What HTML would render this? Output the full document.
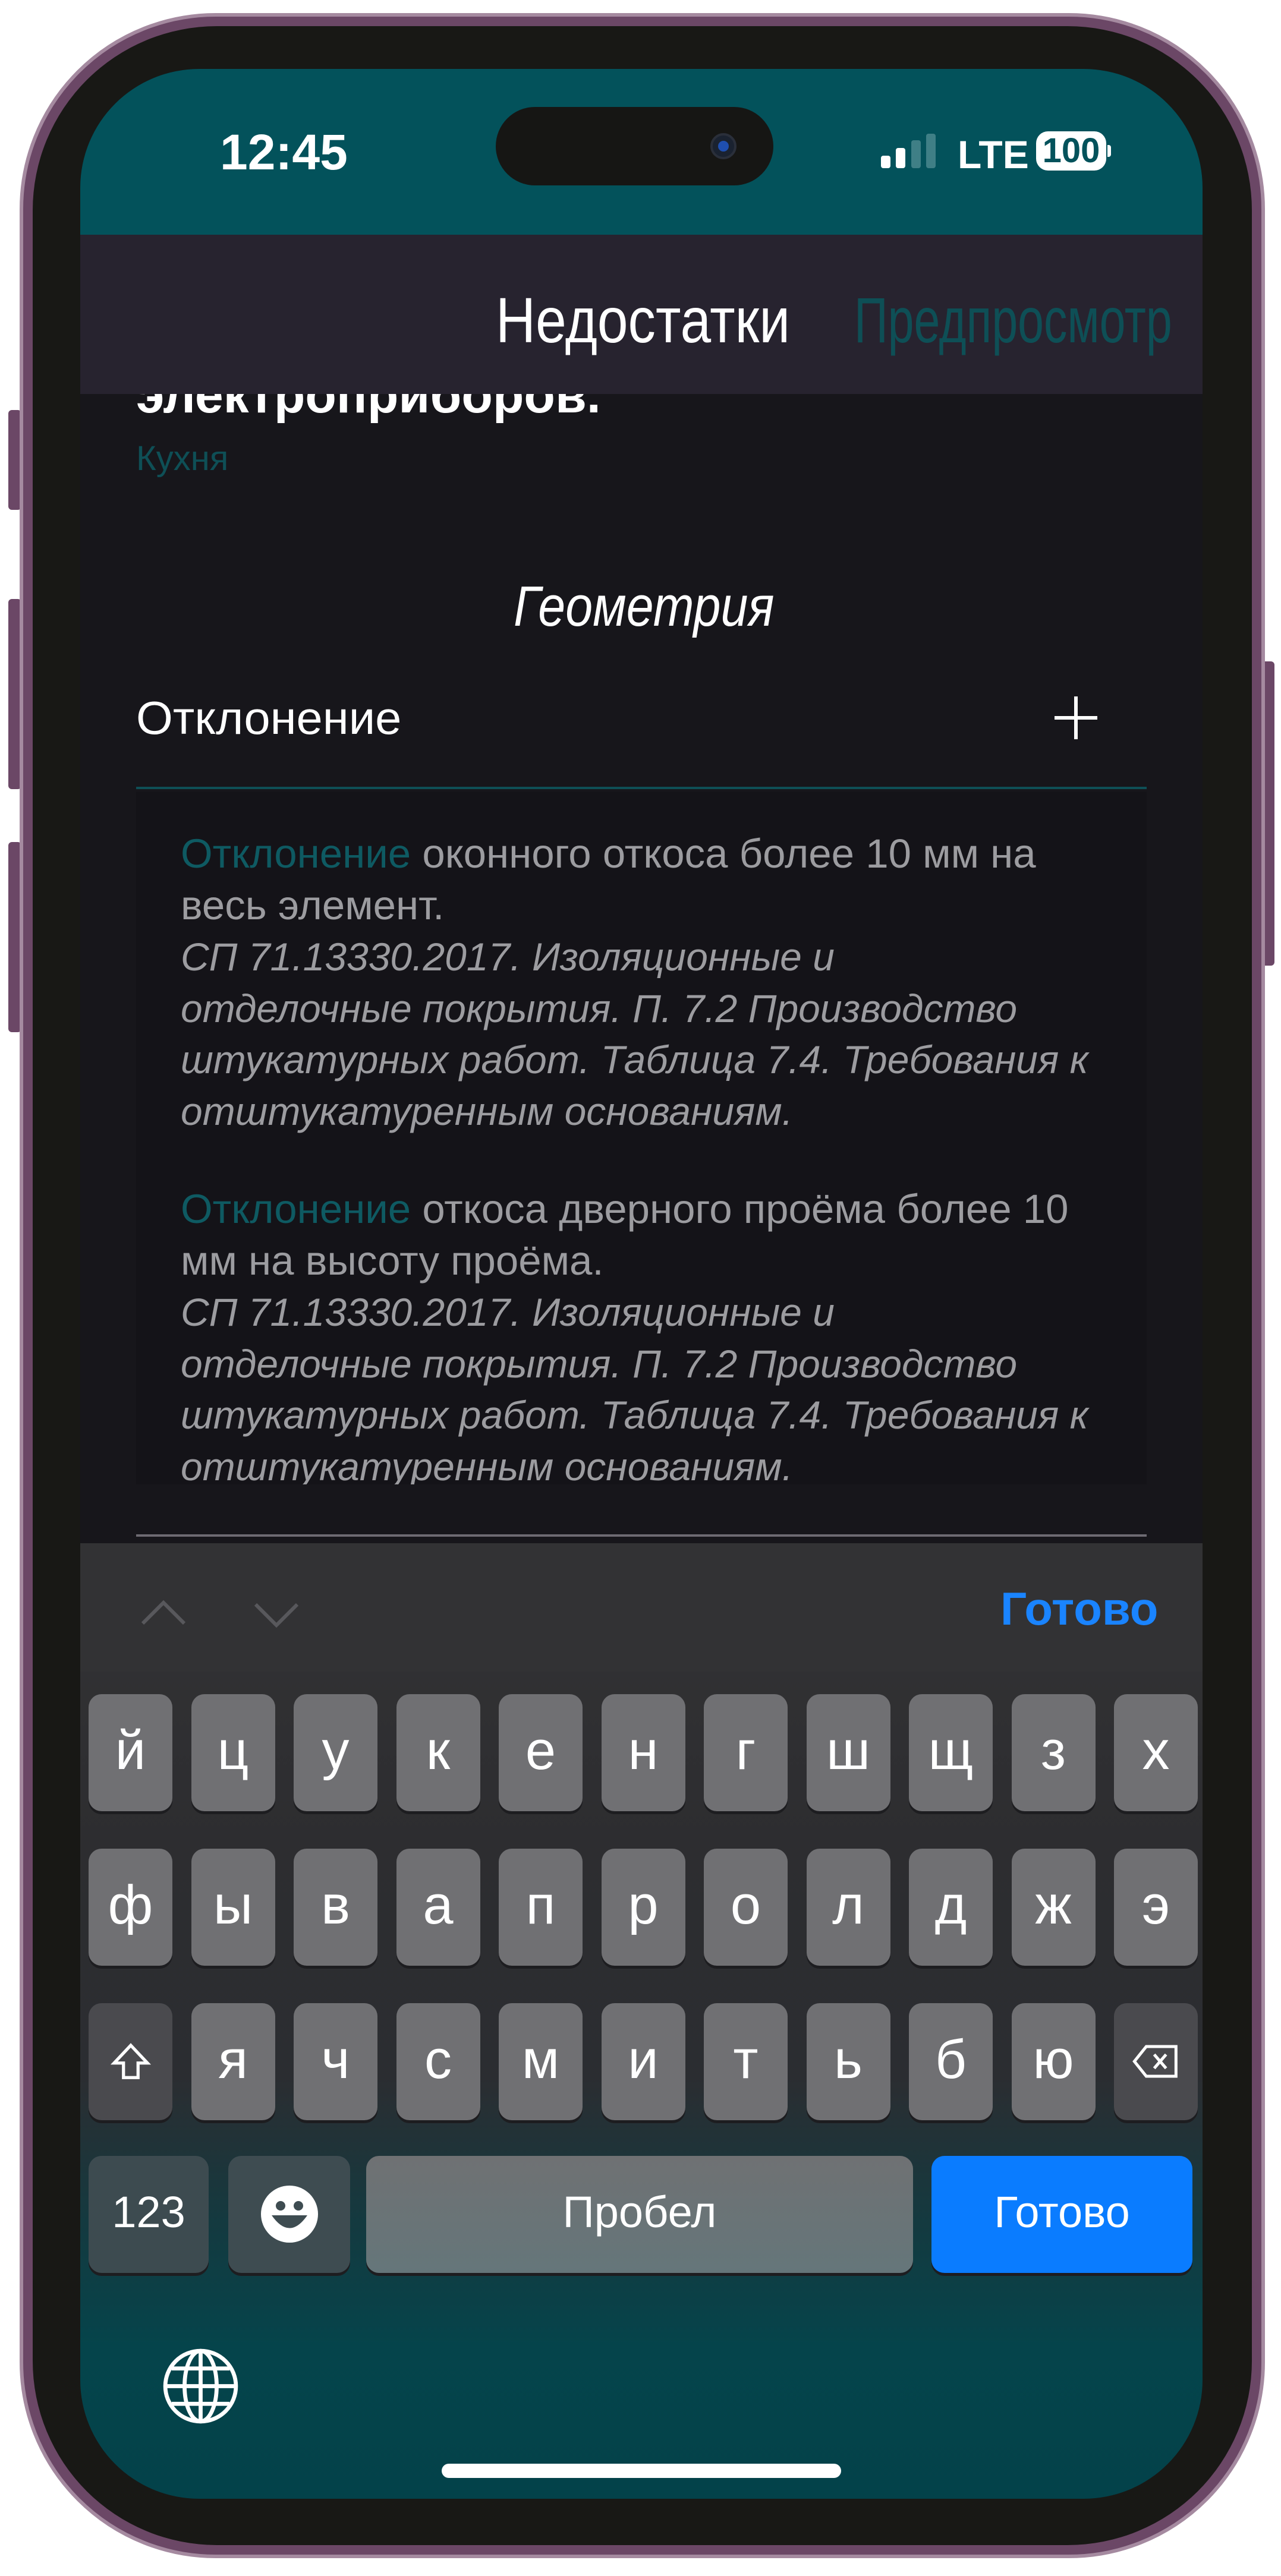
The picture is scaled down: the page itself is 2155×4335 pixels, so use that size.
<!DOCTYPE html>
<html><head><meta charset="utf-8"><style>
*{margin:0;padding:0;box-sizing:border-box}
body{width:2155px;height:4335px;background:#fff;position:relative;overflow:hidden;font-family:"Liberation Sans","DejaVu Sans",sans-serif}
.abs{position:absolute}
.frame{left:33px;top:22px;width:2095px;height:4283px;border-radius:330px;background:#6b4766;border:6px solid #a58aa0}
.bezel{left:55px;top:44px;width:2051px;height:4239px;border-radius:310px;background:#181815}
.screen{left:135px;top:116px;width:1888px;height:4089px;border-radius:200px;overflow:hidden;background:#17161b}
.key{position:absolute;width:141px;height:197px;border-radius:22px;background:#707073;color:#fff;font-size:92px;text-align:center;line-height:190px;box-shadow:0 5px 0 #1d1d20}
.btn{position:absolute;background:#6b4766;border-radius:6px}
.t{position:absolute;white-space:nowrap}
.p{position:absolute;left:169px;font-size:69px;line-height:86.5px;color:#9c9ca0;white-space:nowrap}
.p i{font-style:italic;font-size:66px}
.p b{font-weight:normal;color:#0e5a62}
</style></head><body>
<div class="btn" style="left:14px;top:690px;width:22px;height:168px"></div>
<div class="btn" style="left:14px;top:1008px;width:22px;height:320px"></div>
<div class="btn" style="left:14px;top:1417px;width:22px;height:320px"></div>
<div class="btn" style="left:2122px;top:1113px;width:22px;height:512px"></div>
<div class="abs frame"></div>
<div class="abs bezel"></div>
<div class="abs screen">
  <div class="abs" style="left:0;top:0;width:1888px;height:279px;background:#03525b"></div>
  <div class="t" style="left:235px;top:92px;font-size:84px;font-weight:bold;color:#fff">12:45</div>
  <div class="abs" style="left:699px;top:64px;width:467px;height:132px;border-radius:66px;background:#161614"></div>
  <div class="abs" style="left:1060px;top:108px;width:44px;height:44px;border-radius:50%;background:#1a2230;border:4px solid #2a2f3a"><div class="abs" style="left:9px;top:9px;width:18px;height:18px;border-radius:50%;background:#1f4fb0"></div></div>
  <div class="abs" style="left:1347px;top:146px;width:16px;height:21px;border-radius:4px;background:#fff"></div>
  <div class="abs" style="left:1372px;top:133px;width:16px;height:34px;border-radius:4px;background:#fff"></div>
  <div class="abs" style="left:1398px;top:120px;width:16px;height:47px;border-radius:4px;background:#3f7f86"></div>
  <div class="abs" style="left:1423px;top:109px;width:16px;height:58px;border-radius:4px;background:#3f7f86"></div>
  <div class="t" style="left:1476px;top:106px;font-size:66px;font-weight:bold;color:#fff">LTE</div>
  <div class="abs" style="left:1608px;top:105px;width:118px;height:66px;border-radius:20px;background:#fff;color:#03525b;font-weight:bold;font-size:58px;text-align:center;line-height:66px">100</div>
  <div class="abs" style="left:1728px;top:128px;width:6px;height:20px;border-radius:0 4px 4px 0;background:#fff"></div>
  <div class="t" style="left:94px;top:500px;font-size:86px;font-weight:bold;color:#fff">электроприборов.</div>
  <div class="abs" style="left:0;top:279px;width:1888px;height:268px;background:#27232f"></div>
  <div class="t" style="left:699px;top:360px;font-size:108px;color:#fff;transform:scaleX(.86);transform-origin:left">Недостатки</div>
  <div class="t" style="left:1302px;top:360px;font-size:108px;color:#0e4f56;transform:scaleX(.73);transform-origin:left">Предпросмотр</div>
  <div class="t" style="left:94px;top:622px;font-size:58px;color:#0e4f56">Кухня</div>
  <div class="t" style="left:729px;top:850px;font-size:96px;font-style:italic;color:#fff;transform:scaleX(.86);transform-origin:left">Геометрия</div>
  <div class="t" style="left:94px;top:1047px;font-size:78px;color:#fff;transform:scaleX(1.02);transform-origin:left">Отклонение</div>
  <div class="abs" style="left:1639px;top:1089px;width:72px;height:6px;background:#fff"></div>
  <div class="abs" style="left:1672px;top:1056px;width:6px;height:72px;background:#fff"></div>
  <div class="abs" style="left:94px;top:1208px;width:1700px;height:4px;background:#0e4f56"></div>
  <div class="abs" style="left:94px;top:1216px;width:1700px;height:1166px;background:#141318;overflow:hidden">
    <div class="p" style="left:75px;top:62px"><b>Отклонение</b> оконного откоса более 10 мм на<br>весь элемент.<br><i>СП 71.13330.2017. Изоляционные и<br>отделочные покрытия. П. 7.2 Производство<br>штукатурных работ. Таблица 7.4. Требования к<br>отштукатуренным основаниям.</i></div>
    <div class="p" style="left:75px;top:660px"><b>Отклонение</b> откоса дверного проёма более 10<br>мм на высоту проёма.<br><i>СП 71.13330.2017. Изоляционные и<br>отделочные покрытия. П. 7.2 Производство<br>штукатурных работ. Таблица 7.4. Требования к<br>отштукатуренным основаниям.</i></div>
  </div>
  <div class="abs" style="left:94px;top:2466px;width:1700px;height:4px;background:#6d6a72"></div>
  <div class="abs" style="left:0;top:2481px;width:1888px;height:1608px;background:linear-gradient(#333335 0px,#2d2d30 500px,#2b2d31 900px,#15393f 1130px,#05444b 1350px,#03424a 1608px)"></div>
  <div class="abs" style="left:0;top:2481px;width:1888px;height:216px;background:#323234"></div>
  <svg class="abs" style="left:95px;top:2556px" width="400" height="80"><path d="M10 60 L45 25 L80 60" fill="none" stroke="#58585c" stroke-width="6"/><path d="M200 28 L235 63 L270 28" fill="none" stroke="#58585c" stroke-width="6"/></svg>
  <div class="t" style="left:1548px;top:2546px;font-size:78px;font-weight:bold;color:#1a84ff">Готово</div>
  <div id="kb"></div>
  <div class="key" style="left:14px;top:3512px;width:202px;background:#3d4b50;font-size:74px">123</div>
  <div class="key" style="left:249px;top:3512px;width:205px;background:#3e4c51"><svg width="100" height="100" style="margin-top:48px"><circle cx="50" cy="50" r="48" fill="#fff"/><circle cx="35" cy="36" r="8" fill="#3e4c51"/><circle cx="65" cy="36" r="8" fill="#3e4c51"/><path d="M20 52 Q50 95 80 52 Z" fill="#3e4c51"/></svg></div>
  <div class="key" style="left:481px;top:3512px;width:920px;background:linear-gradient(#6f7173,#65767a);font-size:74px">Пробел</div>
  <div class="key" style="left:1432px;top:3512px;width:439px;background:#0a7cff;font-size:74px">Готово</div>
  <svg class="abs" style="left:135px;top:3832px" width="135" height="135" viewBox="0 0 100 100" fill="none" stroke="#fff" stroke-width="5"><circle cx="50" cy="50" r="44"/><ellipse cx="50" cy="50" rx="20" ry="44"/><line x1="50" y1="6" x2="50" y2="94"/><line x1="6" y1="50" x2="94" y2="50"/><path d="M14 28 H86 M14 72 H86"/></svg>
  <div class="abs" style="left:608px;top:4030px;width:672px;height:24px;border-radius:12px;background:#fff"></div>
</div>
<script>
var rows=[["й","ц","у","к","е","н","г","ш","щ","з","х"],["ф","ы","в","а","п","р","о","л","д","ж","э"],["⇧","я","ч","с","м","и","т","ь","б","ю","⌫"]];
var tops=[2735,2995,3255],h="";
rows.forEach(function(r,ri){r.forEach(function(c,i){var sp=(c=="⇧"||c=="⌫");var x=14+i*172.5;
var inner=c;
if(c=="⇧")inner='<svg width="70" height="70" viewBox="0 0 40 40" style="margin-top:64px" fill="none" stroke="#fff" stroke-width="3"><path d="M20 4 L36 21 H27 V35 H13 V21 H4 Z"/></svg>';
if(c=="⌫")inner='<svg width="80" height="60" viewBox="0 0 48 36" style="margin-top:68px" fill="none" stroke="#fff" stroke-width="3"><path d="M14 3 H44 V33 H14 L2 18 Z"/><path d="M22 11 L34 25 M34 11 L22 25"/></svg>';
h+='<div class="key" style="left:'+x+'px;top:'+tops[ri]+'px;'+(sp?'background:#4a4a4e':'')+'">'+inner+'</div>';});});
document.getElementById("kb").innerHTML=h;
</script>
</body></html>
